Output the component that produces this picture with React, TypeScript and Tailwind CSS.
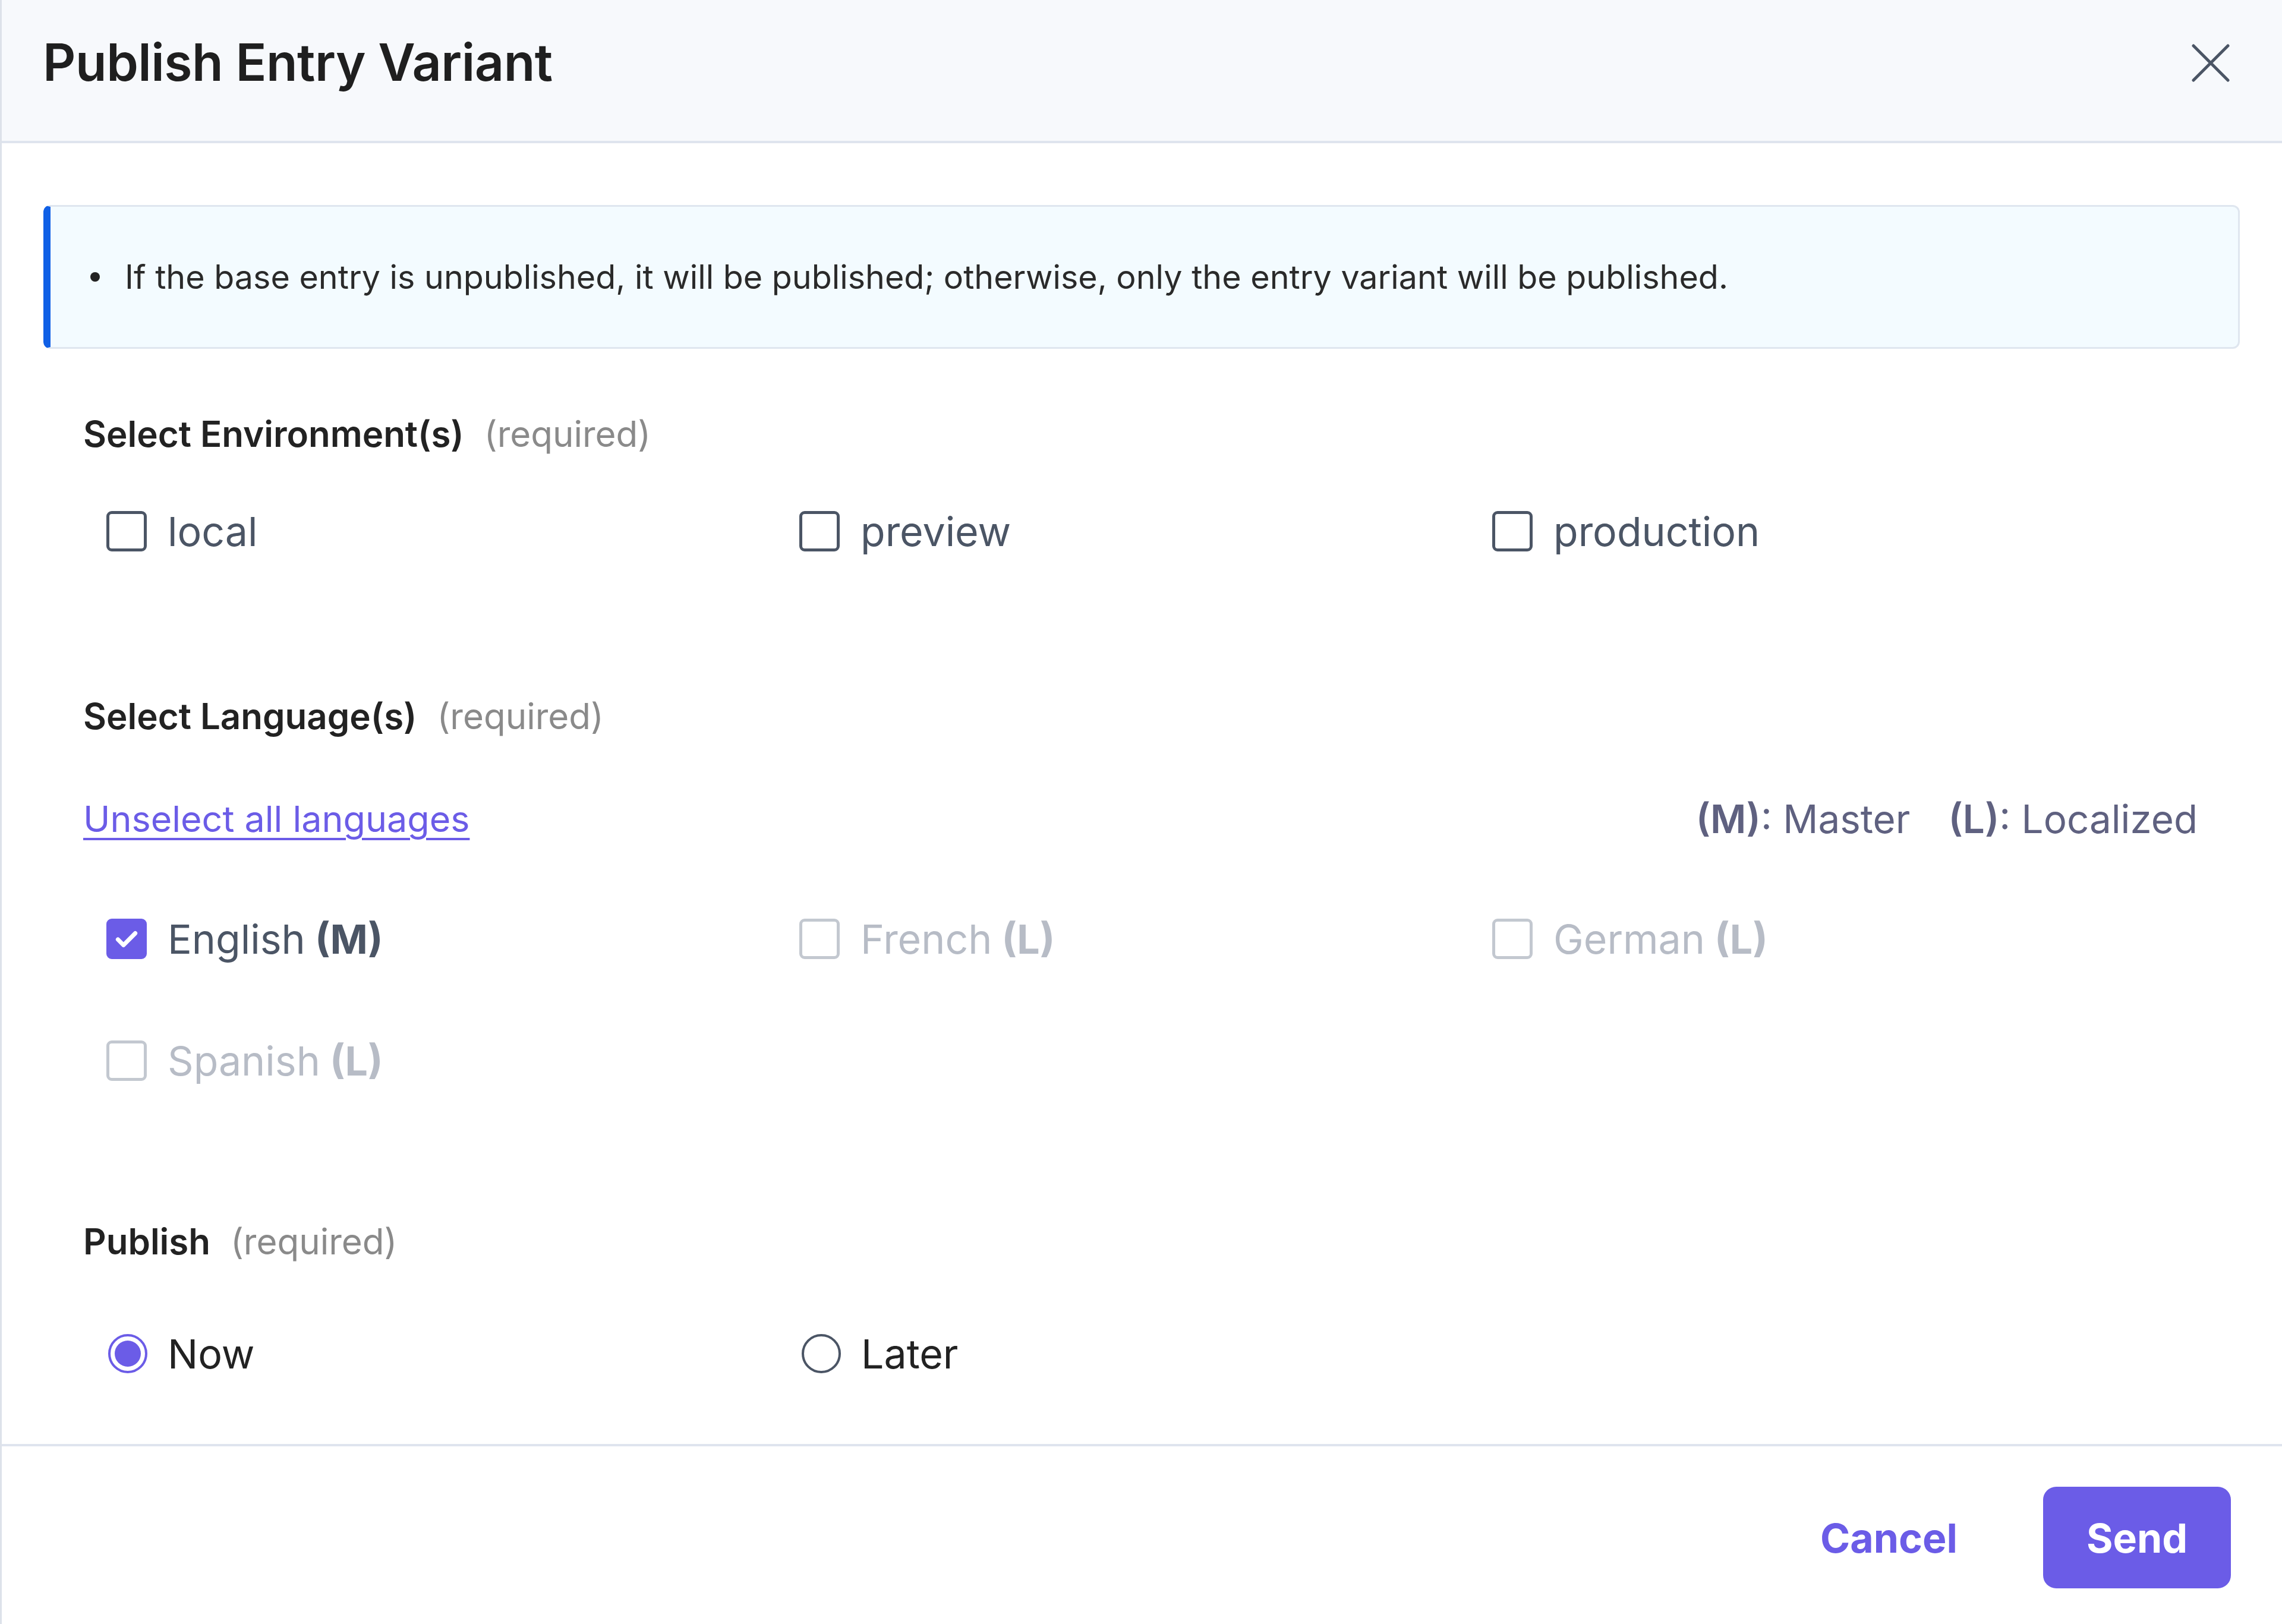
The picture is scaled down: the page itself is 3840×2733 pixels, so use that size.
import React from 'react';

type Option = { id: string; label: string; tag?: string; checked?: boolean; disabled?: boolean };

const environments: Option[] = [
  { id: 'local', label: 'local' },
  { id: 'preview', label: 'preview' },
  { id: 'production', label: 'production' },
];

const languages: Option[] = [
  { id: 'en', label: 'English', tag: '(M)', checked: true },
  { id: 'fr', label: 'French', tag: '(L)', disabled: true },
  { id: 'de', label: 'German', tag: '(L)', disabled: true },
  { id: 'es', label: 'Spanish', tag: '(L)', disabled: true },
];

const SectionLabel: React.FC<{ title: string }> = ({ title }) => (
  <div className="h-[80px] flex items-center gap-[34px]">
    <span className="text-[60px] font-semibold text-[#222222]">{title}</span>
    <span className="text-[60px] text-[#8a8a8a]">(required)</span>
  </div>
);

const CheckItem: React.FC<{ opt: Option }> = ({ opt }) => {
  const box = opt.checked
    ? 'bg-[#6b5ce7] border-[#6b5ce7]'
    : opt.disabled
    ? 'bg-white border-[#c3c8d0]'
    : 'bg-white border-[#4b5565]';
  const text = opt.disabled ? 'text-[#b7bcc6]' : 'text-[#4b5565]';
  return (
    <label className="h-[80px] flex items-center gap-[35px]">
      <span className={`w-[68px] h-[68px] rounded-[9px] border-[5px] flex items-center justify-center ${box}`}>
        {opt.checked && (
          <svg viewBox="0 0 24 24" className="w-[50px] h-[50px]" fill="none" stroke="white" strokeWidth="3.4" strokeLinecap="round" strokeLinejoin="round">
            <path d="M5 12.5l4.5 4.5L19 7.5" />
          </svg>
        )}
      </span>
      <span className={`text-[68px] ${text}`}>
        {opt.label}
        {opt.tag && <span className="font-bold"> {opt.tag}</span>}
      </span>
    </label>
  );
};

const RadioItem: React.FC<{ label: string; checked?: boolean }> = ({ label, checked }) => (
  <label className="h-[80px] flex items-center gap-[34px]">
    <span
      className={`w-[66px] h-[66px] rounded-full border-[4px] flex items-center justify-center ${
        checked ? 'border-[#6b5ce7]' : 'border-[#4b5565]'
      }`}
    >
      {checked && <span className="w-[44px] h-[44px] rounded-full bg-[#6b5ce7]" />}
    </span>
    <span className="text-[68px] text-[#222222]">{label}</span>
  </label>
);

const App: React.FC = () => {
  return (
    <div
      className="w-[3840px] h-[2733px] bg-white border-l-[3px] border-[#dde2ea] flex flex-col overflow-hidden"
      style={{ fontFamily: 'Inter, "Noto Sans", sans-serif' }}
    >
      {/* Header */}
      <div className="h-[241px] shrink-0 bg-[#f7f9fc] border-b-[4px] border-[#dfe4ee] flex items-center justify-between pl-[69px] pr-[88px] pb-[26px]">
        <h1 className="text-[86px] font-semibold text-[#1f1f1f] tracking-[-0.5px]">Publish Entry Variant</h1>
        <button className="w-[64px] h-[64px] flex items-center justify-center">
          <svg viewBox="0 0 64 64" className="w-[64px] h-[64px]" fill="none" stroke="#4b5565" strokeWidth="5" strokeLinecap="round">
            <path d="M3 3L61 61M61 3L3 61" />
          </svg>
        </button>
      </div>

      {/* Body */}
      <div className="flex-1 flex flex-col pl-[70px] pr-[71px] pt-[104px]">
        <div className="h-[242px] rounded-[12px] border-[3px] border-l-[12px] border-[#dfe6ef] border-l-[#1060e6] bg-[#f3fbff] flex items-center pl-[67px]">
          <span className="w-[16px] h-[16px] rounded-full bg-[#222222] shrink-0" />
          <p className="ml-[42px] text-[55.6px] text-[#2a2a2a]">
            If the base entry is unpublished, it will be published; otherwise, only the entry variant will be published.
          </p>
        </div>

        <div className="pl-[67px] pr-[69px] flex flex-col">
          <div className="mt-[103px]">
            <SectionLabel title="Select Environment(s)" />
          </div>
          <div className="mt-[84px] pl-[39px] grid grid-cols-[1166px_1166px_1fr]">
            {environments.map(env => (
              <CheckItem key={env.id} opt={env} />
            ))}
          </div>

          <div className="mt-[231px]">
            <SectionLabel title="Select Language(s)" />
          </div>
          <div className="mt-[94px] h-[80px] flex items-center justify-between">
            <a href="#" className="text-[61px] text-[#6b5ce7] underline underline-offset-[10px] decoration-[4px]">
              Unselect all languages
            </a>
            <div className="text-[65.5px] text-[#5f6180] flex items-center gap-[64px] mr-[2px]">
              <span>
                <span className="font-semibold">(M)</span>: Master
              </span>
              <span>
                <span className="font-semibold">(L)</span>: Localized
              </span>
            </div>
          </div>
          <div className="mt-[121px] pl-[39px] grid grid-cols-[1166px_1166px_1fr] gap-y-[125px]">
            {languages.map(lang => (
              <CheckItem key={lang.id} opt={lang} />
            ))}
          </div>

          <div className="mt-[224px]">
            <SectionLabel title="Publish" />
          </div>
          <div className="mt-[109px] pl-[42px] grid grid-cols-[1167px_1fr]">
            <RadioItem label="Now" checked />
            <RadioItem label="Later" />
          </div>
        </div>
      </div>

      {/* Footer */}
      <div className="h-[303px] shrink-0 border-t-[4px] border-[#dfe4ee] flex items-start justify-end pt-[68px] pr-[86px] gap-[144px]">
        <button className="h-[171px] text-[68px] font-bold text-[#6b5ce7]">Cancel</button>
        <button className="w-[316px] h-[171px] rounded-[22px] bg-[#6b5ce7] text-[68px] font-bold text-white">Send</button>
      </div>
    </div>
  );
};

export default App;
